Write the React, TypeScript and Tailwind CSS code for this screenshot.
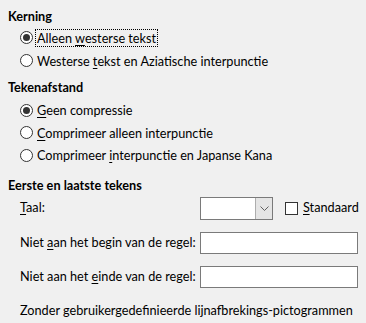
import React from "react";

const font = { fontFamily: 'Lato, "Noto Sans", sans-serif' };

function Radio({ checked, children, focused }: { checked?: boolean; children: React.ReactNode; focused?: boolean }) {
  return (
    <div className="flex items-center h-[23px] pl-[20px]">
      <span className="w-[13px] h-[13px] rounded-full border border-[#333333] bg-white flex items-center justify-center shrink-0">
        {checked && <span className="w-[7px] h-[7px] rounded-full bg-[#333333]" />}
      </span>
      <span
        className={
          "ml-[3px] px-px leading-[16px] whitespace-nowrap " +
          (focused ? "outline outline-1 outline-dotted outline-black" : "")
        }
      >
        {children}
      </span>
    </div>
  );
}

function U({ children }: { children: React.ReactNode }) {
  return <span className="underline underline-offset-2">{children}</span>;
}

function Heading({ children }: { children: React.ReactNode }) {
  return <div className="h-4 leading-4 font-bold px-2">{children}</div>;
}

export default function App() {
  return (
    <div
      className="w-[366px] h-[323px] bg-[#f0f0f0] text-[12.7px] text-black pt-2 overflow-hidden"
      style={font}
    >
      {/* Kerning */}
      <Heading>Kerning</Heading>
      <div className="mt-[2px]">
        <Radio checked focused>
          Alleen <U>w</U>esterse tekst
        </Radio>
        <Radio>
          Westerse <U>t</U>ekst en Aziatische interpunctie
        </Radio>
      </div>

      {/* Tekenafstand */}
      <div className="mt-[7px]">
        <Heading>Tekenafstand</Heading>
      </div>
      <div className="mt-[4px] [&>div]:h-[22.5px]">
        <Radio checked>
          <U>G</U>een compressie
        </Radio>
        <Radio>
          <U>C</U>omprimeer alleen interpunctie
        </Radio>
        <Radio>
          Comprimeer <U>i</U>nterpunctie en Japanse Kana
        </Radio>
      </div>

      {/* Eerste en laatste tekens */}
      <div className="mt-[10px]">
        <Heading>Eerste en laatste tekens</Heading>
      </div>
      <div className="pl-[20px] pr-2 mt-[4px] flex flex-col gap-3">
        <div className="flex items-center h-[23px]">
          <span className="w-[180px] shrink-0">
            <U>T</U>aal:
          </span>
          <div className="w-[73px] h-[23px] shrink-0 border border-[#7a7a7a] bg-white flex justify-end">
            <div className="w-[17px] h-full border-l border-[#adadad] bg-[#e5e5e5] flex items-center justify-center">
              <svg width="9" height="5" viewBox="0 0 9 5">
                <path d="M0.5 0.5 L4.5 4.5 L8.5 0.5" fill="none" stroke="#606060" strokeWidth="1" />
              </svg>
            </div>
          </div>
          <span className="ml-[12px] w-[13px] h-[13px] shrink-0 border border-[#333333] bg-white" />
          <span className="ml-[5px]">
            <U>S</U>tandaard
          </span>
        </div>
        <div className="flex items-center h-[22px]">
          <span className="w-[180px] shrink-0 whitespace-nowrap">
            Niet <U>a</U>an het begin van de regel:
          </span>
          <div className="w-[158px] h-[22px] shrink-0 border border-[#7a7a7a] bg-white" />
        </div>
        <div className="flex items-center h-[22px]">
          <span className="w-[180px] shrink-0 whitespace-nowrap">
            Niet aan het <U>e</U>inde van de regel:
          </span>
          <div className="w-[158px] h-[22px] shrink-0 border border-[#7a7a7a] bg-white" />
        </div>
        <div className="h-4 leading-4 mt-[2px] whitespace-nowrap">
          Zonder gebruikergedefinieerde lijnafbrekings-pictogrammen
        </div>
      </div>
    </div>
  );
}
